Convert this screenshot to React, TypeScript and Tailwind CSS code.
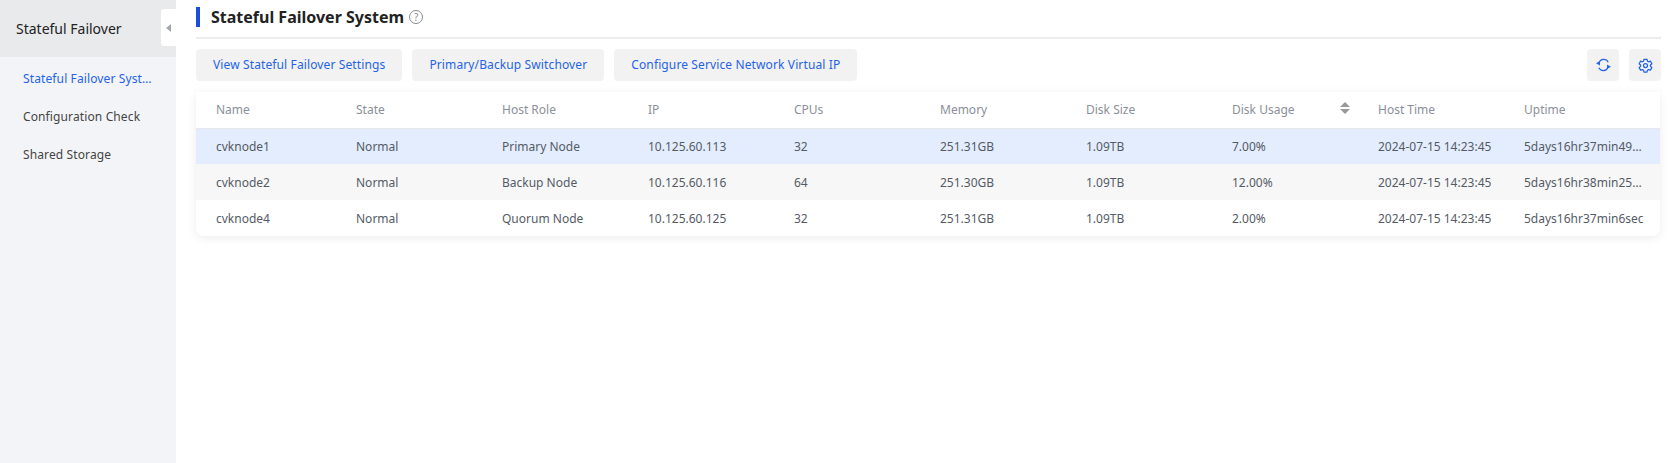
const font = "font-['Noto_Sans','Noto_Sans_CJK_SC',sans-serif]";

const columns = [
  { label: "Name", width: "w-[140px]" },
  { label: "State", width: "w-[146px]" },
  { label: "Host Role", width: "w-[146px]" },
  { label: "IP", width: "w-[146px]" },
  { label: "CPUs", width: "w-[146px]" },
  { label: "Memory", width: "w-[146px]" },
  { label: "Disk Size", width: "w-[146px]" },
  { label: "Disk Usage", width: "w-[146px]", sortable: true },
  { label: "Host Time", width: "w-[146px]" },
  { label: "Uptime", width: "w-[156px]" },
];

const rows = [
  ["cvknode1", "Normal", "Primary Node", "10.125.60.113", "32", "251.31GB", "1.09TB", "7.00%", "2024-07-15 14:23:45", "5days16hr37min49sec"],
  ["cvknode2", "Normal", "Backup Node", "10.125.60.116", "64", "251.30GB", "1.09TB", "12.00%", "2024-07-15 14:23:45", "5days16hr38min25sec"],
  ["cvknode4", "Normal", "Quorum Node", "10.125.60.125", "32", "251.31GB", "1.09TB", "2.00%", "2024-07-15 14:23:45", "5days16hr37min6sec"],
];

const rowBg = ["bg-[#e3edfd]", "bg-[#f7f7f7]", "bg-white"];

function SortIcon() {
  return (
    <svg width="10" height="12" viewBox="0 0 10 12" className="-mt-[3px] fill-[#999]">
      <path d="M5 0 10 5H0Z" />
      <path d="M5 12 0 7h10Z" />
    </svg>
  );
}

function RefreshIcon() {
  return (
    <svg width="15" height="14" viewBox="0 0 15 14" fill="none" className="text-[#2563eb]">
      <path d="M3 4.800A5 5 0 0 1 12.200 4.200" stroke="currentColor" strokeWidth="1.200" />
      <path d="M12 9.200A5 5 0 0 1 2.800 9.800" stroke="currentColor" strokeWidth="1.200" />
      <path d="M0 5.200 4 3V7.400Z" fill="currentColor" />
      <path d="M15 8.800 11 11V6.600Z" fill="currentColor" />
    </svg>
  );
}

function GearIcon() {
  return (
    <svg width="15" height="15" viewBox="0 0 24 24" fill="none" stroke="#2563eb" strokeWidth="2" strokeLinejoin="round">
      <path d="M9.600 2h4.800l.7 3.100 1.700 1 3-1 2.400 4.100-2.300 2.100v2l2.300 2.100-2.400 4.100-3-1-1.700 1-.7 3.100H9.600l-.7-3.100-1.700-1-3 1-2.400-4.100 2.300-2.100v-2L1.800 9.200l2.400-4.100 3 1 1.700-1z" />
      <circle cx="12" cy="12" r="3.200" />
    </svg>
  );
}

function ActionButton(props: { label: string }) {
  return (
    <button className="h-8 rounded-[4px] bg-[#f2f2f2] px-[17px] text-xs tracking-[0.12px] text-[#2563eb]">
      {props.label}
    </button>
  );
}

export default function App() {
  return (
    <div className={`${font} flex h-[463px] w-[1671px] overflow-hidden bg-white text-xs`}>
      <aside className="relative w-[176px] shrink-0 bg-[#f3f4f7]">
        <div className="flex h-[57px] items-center bg-[#e9eaec] pl-4 text-sm text-[#222]">
          Stateful Failover
        </div>
        <button className="absolute right-0 top-[9px] flex h-[37px] w-[15px] items-center justify-center rounded-l-[3px] bg-white">
          <span className="h-0 w-0 border-y-[4px] border-r-[5px] border-y-transparent border-r-[#a3a7b0]" />
        </button>
        <nav className="flex flex-col pl-[23px] pr-6 pt-[3px] tracking-[0.12px]">
          <a className="flex h-[38px] items-center text-[#2563eb]">
            <span className="truncate">Stateful Failover System</span>
          </a>
          <a className="flex h-[38px] items-center text-[#444]">Configuration Check</a>
          <a className="flex h-[38px] items-center text-[#444]">Shared Storage</a>
        </nav>
      </aside>

      <main className="min-w-0 flex-1 pl-5 pr-[10px]">
        <div className="flex h-[39px] items-center border-b-2 border-[#ececec] pb-[3px]">
          <span className="h-5 w-1 bg-[#1d4ed8]" />
          <h1 className="ml-[11px] text-base font-bold text-[#222]">Stateful Failover System</h1>
          <span className="ml-[5px] flex h-[14px] w-[14px] items-center justify-center rounded-full border border-[#8a8a8a] text-[10px] leading-none text-[#8a8a8a]">
            ?
          </span>
        </div>

        <div className="mt-[10px] flex items-center justify-between">
          <div className="flex gap-[10px]">
            <ActionButton label="View Stateful Failover Settings" />
            <ActionButton label="Primary/Backup Switchover" />
            <ActionButton label="Configure Service Network Virtual IP" />
          </div>
          <div className="flex gap-[10px]">
            <button className="flex h-8 w-8 items-center justify-center rounded-[4px] bg-[#f2f2f2]">
              <RefreshIcon />
            </button>
            <button className="flex h-8 w-8 items-center justify-center rounded-[4px] bg-[#f2f2f2]">
              <GearIcon />
            </button>
          </div>
        </div>

        <div className="mr-px mt-[11px] overflow-hidden rounded-b-lg shadow-[0_2px_10px_rgba(0,0,0,0.08)]">
          <table className="w-full table-fixed border-collapse">
            <colgroup>
              {columns.map((c) => (
                <col key={c.label} className={c.width} />
              ))}
            </colgroup>
            <thead>
              <tr className="h-[36px] border-b border-[#e6e8ec]">
                {columns.map((c) => (
                  <th key={c.label} className="pl-5 pr-2 text-left font-normal text-[#8a8f99]">
                    <div className="flex items-center justify-between">
                      {c.label}
                      {c.sortable ? <SortIcon /> : null}
                    </div>
                  </th>
                ))}
              </tr>
            </thead>
            <tbody>
              {rows.map((row, i) => (
                <tr key={row[0]} className={`h-[36px] ${rowBg[i]}`}>
                  {row.map((cell, j) => (
                    <td key={j} className="truncate pl-5 pr-2 pt-[2px] text-[#555b66] last:pr-4">
                      {cell}
                    </td>
                  ))}
                </tr>
              ))}
            </tbody>
          </table>
        </div>
      </main>
    </div>
  );
}
